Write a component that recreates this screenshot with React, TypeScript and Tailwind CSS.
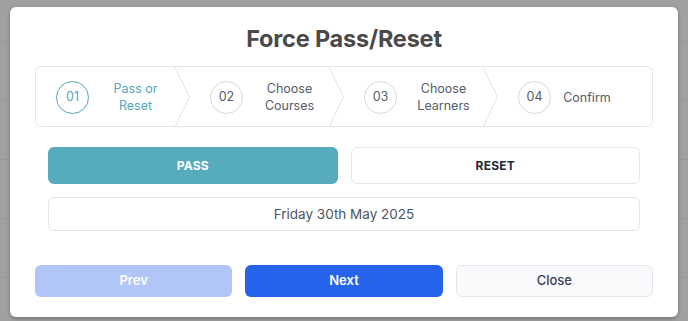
import { Fragment } from 'react';

const steps = [
  { num: '01', label: ['Pass or', 'Reset'], active: true },
  { num: '02', label: ['Choose', 'Courses'], active: false },
  { num: '03', label: ['Choose', 'Learners'], active: false },
  { num: '04', label: ['Confirm'], active: false },
];

const Chevron = () => (
  <svg className="w-[15px] h-full shrink-0 self-stretch" viewBox="0 0 15 60" preserveAspectRatio="none">
    <polyline points="0,0 14.5,30 0,60" fill="none" stroke="#dfe2e7" strokeWidth="1" vectorEffect="non-scaling-stroke" />
  </svg>
);

const App = () => {
  return (
    <div className="relative w-[688px] h-[321px] overflow-hidden bg-[#a0a0a0] font-['Inter','Noto_Sans',sans-serif]">
      {/* dimmed page behind the dialog */}
      <div className="flex flex-col">
        <div className="h-[42px] border-b border-[#999999]" />
        {[0, 1, 2, 3, 4].map((row) => (
          <div key={row} className="h-[59px] border-b border-[#999999]" />
        ))}
      </div>

      {/* Dialog */}
      <div className="absolute left-[10px] top-[7px] w-[668px] h-[310px] bg-white rounded-md shadow-[0_2px_4px_rgba(0,0,0,0.25)] px-[25px] pt-[16px] pb-[20px] flex flex-col">
        <h2 className="text-center text-[23.5px] leading-[32px] font-bold text-[#4a4a4a] tracking-[-0.2px]">
          Force Pass/Reset
        </h2>

        {/* Stepper */}
        <div className="mt-[11px] h-[61px] border border-[#e2e5ea] rounded-md grid grid-cols-4">
          {steps.map((step, i) => (
            <div key={step.num} className="flex items-center pl-5">
              <div
                className={
                  step.active
                    ? 'w-[33px] h-[33px] rounded-full border-[1.5px] border-[#4fa8bb] text-[#4fa8bb] flex items-center justify-center text-[12.5px] shrink-0'
                    : 'w-[33px] h-[33px] rounded-full border-[1.5px] border-[#d5d8de] text-[#555d69] flex items-center justify-center text-[12.5px] shrink-0'
                }
              >
                {step.num}
              </div>
              <div
                className={
                  step.active
                    ? 'flex-1 text-center text-[12.5px] leading-[17px] text-[#4fa8bb] ml-[7px]'
                    : 'flex-1 text-center text-[12.5px] leading-[17px] text-[#555d69] ml-[7px]'
                }
              >
                {step.label.map((line, j) => (
                  <Fragment key={j}>
                    {j > 0 && <br />}
                    {line}
                  </Fragment>
                ))}
              </div>
              {i < steps.length - 1 ? <Chevron /> : <div className="w-[36px] shrink-0" />}
            </div>
          ))}
        </div>

        {/* Pass / Reset and date */}
        <div className="mt-[20px] px-[13px] flex flex-col gap-[13px]">
          <div className="grid grid-cols-2 gap-[13px]">
            <button className="h-[37px] rounded-md bg-[#56abbf] text-white text-[12px] font-bold tracking-[0.2px]">
              PASS
            </button>
            <button className="h-[37px] rounded-md bg-white border border-[#e2e5ea] text-[#1f2937] text-[12px] font-bold tracking-[0.2px]">
              RESET
            </button>
          </div>
          <div className="h-[34px] rounded-md border border-[#e2e5ea] flex items-center justify-center text-[13.5px] text-[#4b5563]">
            Friday 30th May 2025
          </div>
        </div>

        {/* Footer */}
        <div className="mt-auto grid grid-cols-3 gap-[13px]">
          <button className="h-[32px] rounded-md bg-[#b1c6f6] text-white text-[13px] font-semibold">
            Prev
          </button>
          <button className="h-[32px] rounded-md bg-[#2563eb] text-white text-[13px] font-semibold">
            Next
          </button>
          <button className="h-[32px] rounded-md bg-[#f9fafb] border border-[#e2e5ea] text-[#374151] text-[13px] font-medium">
            Close
          </button>
        </div>
      </div>
    </div>
  );
};

export default App;
